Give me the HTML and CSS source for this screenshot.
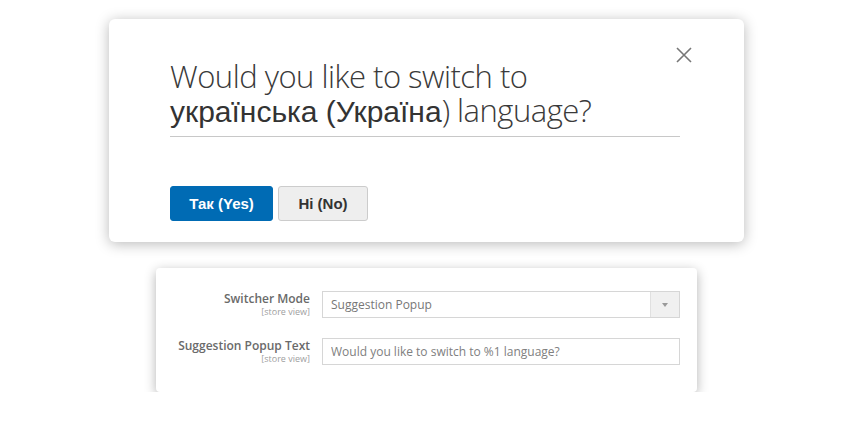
FILE: index.html
```html
<!DOCTYPE html>
<html lang="uk">
  <head>
    <meta charset="UTF-8" />
    <title>Language switcher</title>
    <link rel="stylesheet" href="styles.css">
  </head>
  <body>
    <!-- suggestion popup -->
    <div class="popup">
      <button class="close-btn" aria-label="Close">
        <svg width="16" height="16" viewBox="0 0 16 16">
          <path d="M1 1L15 15M15 1L1 15" stroke="#777" stroke-width="1.6" fill="none" />
        </svg>
      </button>
      <h1 class="popup-title">
        Would you like to switch to<br />
        <span class="lang-name">українська (Україна</span>) language?
      </h1>
      <div class="popup-actions">
        <button class="btn btn-yes">Так (Yes)</button>
        <button class="btn btn-no">Ні (No)</button>
      </div>
    </div>

    <!-- admin config -->
    <div class="config">
      <div class="config-row">
        <label class="config-label">
          Switcher Mode
          <span class="scope">[store view]</span>
        </label>
        <div class="select-box">
          <span class="select-value">Suggestion Popup</span>
          <span class="select-arrow"></span>
        </div>
      </div>
      <div class="config-row">
        <label class="config-label">
          Suggestion Popup Text
          <span class="scope">[store view]</span>
        </label>
        <input class="text-input" type="text" value="Would you like to switch to %1 language?" />
      </div>
    </div>
  </body>
</html>
```

FILE: styles.css
```css
* {
  box-sizing: border-box;
}

body {
  font-family: "Open Sans", sans-serif;
  background: #fff;
  margin: 0;
  padding-top: 19px;
}

.popup {
  position: relative;
  width: 635px;
  height: 223px;
  margin: 0 auto;
  padding: 40px 64px 0 61px;
  background: #fff;
  border-radius: 6px;
  box-shadow: 0 2px 14px rgba(0, 0, 0, 0.28);
}

.close-btn {
  position: absolute;
  top: 28px;
  right: 52px;
  padding: 0;
  border: none;
  background: none;
  line-height: 0;
  cursor: pointer;
}

.popup-title {
  height: 78px;
  margin: 0;
  border-bottom: 1px solid #c8c8c8;
  font-size: 31px;
  line-height: 34px;
  font-weight: 300;
  font-stretch: 94%;
  letter-spacing: -0.5px;
  color: #3a3a3a;
}

.lang-name {
  font-family: "Liberation Sans", Arial, sans-serif;
  font-size: 30px;
  line-height: 1;
  font-weight: 400;
  letter-spacing: 0;
  color: #333;
}

.popup-actions {
  display: flex;
  gap: 5px;
  margin-top: 49px;
}

.btn {
  height: 35px;
  padding: 0;
  border-radius: 3px;
  font-family: "Liberation Sans", Arial, sans-serif;
  font-size: 15px;
  font-weight: 700;
  cursor: pointer;
}

.btn-yes {
  width: 103px;
  background: #006bb4;
  border: 1px solid #006bb4;
  color: #fff;
}

.btn-no {
  width: 90px;
  background: #eee;
  border: 1px solid #ccc;
  color: #333;
}

.config {
  width: 541px;
  margin: 26px auto 0;
  padding: 23px 17px 27px 16px;
  background: #fff;
  border-radius: 4px;
  box-shadow: 0 3px 12px rgba(0, 0, 0, 0.3);
}

.config-row {
  display: grid;
  grid-template-columns: 138px 358px;
  gap: 12px;
}

.config-row + .config-row {
  margin-top: 20px;
}

.config-label {
  text-align: right;
  font-size: 12px;
  line-height: 15px;
  font-weight: 600;
  color: #6a6a6a;
}

.scope {
  display: block;
  margin-top: 1px;
  font-size: 9px;
  line-height: 10px;
  font-weight: 400;
  color: #a0a0a0;
}

.select-box {
  display: flex;
  height: 27px;
  border: 1px solid #d6d6d6;
  background: #fff;
}

.select-value {
  flex: 1;
  padding-left: 8px;
  font-size: 12px;
  line-height: 25px;
  color: #777;
}

.select-arrow {
  position: relative;
  width: 29px;
  background: #f0f0f0;
  border-left: 1px solid #e0e0e0;
}

.select-arrow::after {
  content: "";
  position: absolute;
  top: 11px;
  left: 11px;
  border-left: 3px solid transparent;
  border-right: 3px solid transparent;
  border-top: 4px solid #999;
}

.text-input {
  width: 100%;
  height: 27px;
  padding: 0 8px;
  border: 1px solid #d6d6d6;
  font-family: "Open Sans", sans-serif;
  font-size: 12px;
  color: #808080;
}
```
